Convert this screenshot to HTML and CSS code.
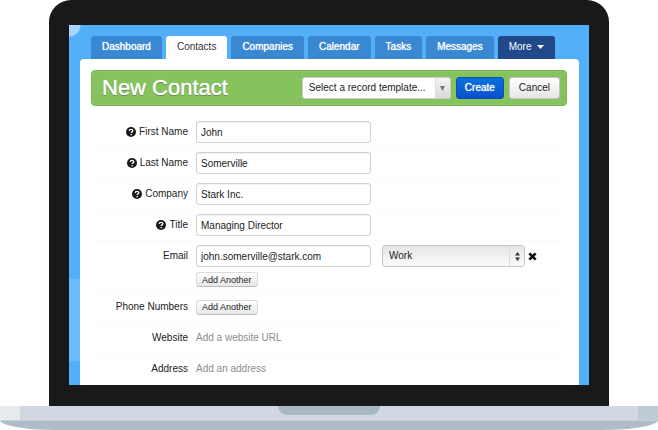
FILE: index.html
```html
<!DOCTYPE html>
<html lang="en">
<head>
    <meta charset="UTF-8">
    <meta name="viewport" content="width=device-width, initial-scale=1.0">
    <title>New Contact</title>
    <link rel="stylesheet" href="styles.css">
</head>
<body>
    <div class="laptop">
        <div class="lid">
            <div class="screen">
                <nav class="tabs">
                    <a href="#" class="tab">Dashboard</a>
                    <a href="#" class="tab active">Contacts</a>
                    <a href="#" class="tab">Companies</a>
                    <a href="#" class="tab">Calendar</a>
                    <a href="#" class="tab">Tasks</a>
                    <a href="#" class="tab">Messages</a>
                    <a href="#" class="tab more">More <svg width="7" height="4" viewBox="0 0 7 4"><path d="M0 0h7L3.5 4z" fill="#fff"/></svg></a>
                </nav>

                <form class="panel">
                    <div class="header">
                        <h1>New Contact</h1>
                        <div class="select-wrap template">
                            <select aria-label="Record template">
                                <option>Select a record template...</option>
                            </select>
                            <span class="arrow"><svg width="5" height="5" viewBox="0 0 5 5"><path d="M0 0h5L2.500 5z" fill="#777"/></svg></span>
                        </div>
                        <button type="button" class="btn primary">Create</button>
                        <button type="button" class="btn">Cancel</button>
                    </div>

                    <div class="row">
                        <label for="firstName"><svg class="help" viewBox="0 0 10 10"><circle cx="5" cy="5" r="5" fill="#1a1a1a"/><path d="M3.200 3.900C3.300 1.700 6.900 1.800 6.800 3.800C6.800 4.900 5.200 4.900 5.200 6.100M5.200 7v1.200" fill="none" stroke="#fff" stroke-width="1.300"/></svg>First Name</label>
                        <input type="text" id="firstName" value="John">
                    </div>
                    <div class="row">
                        <label for="lastName"><svg class="help" viewBox="0 0 10 10"><circle cx="5" cy="5" r="5" fill="#1a1a1a"/><path d="M3.200 3.900C3.300 1.700 6.900 1.800 6.800 3.800C6.800 4.900 5.200 4.900 5.200 6.100M5.200 7v1.200" fill="none" stroke="#fff" stroke-width="1.300"/></svg>Last Name</label>
                        <input type="text" id="lastName" value="Somerville">
                    </div>
                    <div class="row">
                        <label for="company"><svg class="help" viewBox="0 0 10 10"><circle cx="5" cy="5" r="5" fill="#1a1a1a"/><path d="M3.200 3.900C3.300 1.700 6.900 1.800 6.800 3.800C6.800 4.900 5.200 4.900 5.200 6.100M5.200 7v1.200" fill="none" stroke="#fff" stroke-width="1.300"/></svg>Company</label>
                        <input type="text" id="company" value="Stark Inc.">
                    </div>
                    <div class="row">
                        <label for="title"><svg class="help" viewBox="0 0 10 10"><circle cx="5" cy="5" r="5" fill="#1a1a1a"/><path d="M3.200 3.900C3.300 1.700 6.900 1.800 6.800 3.800C6.800 4.900 5.200 4.900 5.200 6.100M5.200 7v1.200" fill="none" stroke="#fff" stroke-width="1.300"/></svg>Title</label>
                        <input type="text" id="title" value="Managing Director">
                    </div>
                    <div class="row email">
                        <label for="email">Email</label>
                        <div class="field">
                            <div class="line">
                                <input type="email" id="email" value="john.somerville@stark.com">
                                <div class="select-wrap kind">
                                    <select aria-label="Email type">
                                        <option>Work</option>
                                        <option>Home</option>
                                    </select>
                                    <span class="arrow"><svg width="5" height="9" viewBox="0 0 5 9"><path d="M0 3.500h5L2.500 0zM0 5.500h5L2.500 9z" fill="#333"/></svg></span>
                                </div>
                                <button type="button" class="remove" aria-label="Remove email"><svg width="9" height="9" viewBox="0 0 9 9"><path d="M1.300 1.300l6.400 6.400M7.700 1.300l-6.400 6.400" stroke="#111" stroke-width="2.600"/></svg></button>
                            </div>
                            <button type="button" class="add">Add Another</button>
                        </div>
                    </div>
                    <div class="row">
                        <span class="label">Phone Numbers</span>
                        <button type="button" class="add">Add Another</button>
                    </div>
                    <div class="row">
                        <span class="label">Website</span>
                        <a href="#" class="hint">Add a website URL</a>
                    </div>
                    <div class="row">
                        <span class="label">Address</span>
                        <a href="#" class="hint">Add an address</a>
                    </div>
                </form>
            </div>
        </div>

        <div class="base">
            <div class="notch"></div>
        </div>
        <div class="underside"></div>
    </div>
</body>
</html>
```

FILE: styles.css
```css
* {
    box-sizing: border-box;
}

body {
    margin: 0;
    background-color: #fff;
    color: #222;
    font-family: "Liberation Sans", Arial, sans-serif;
    font-size: 10px;
    line-height: 12px;
}

input, select, button {
    margin: 0;
    color: #222;
    font-family: inherit;
    font-size: 10px;
    line-height: 12px;
}

a {
    text-decoration: none;
}

/* laptop */
.lid {
    margin: 0 49px;
    padding: 25px 20px 21px;
    background-color: #18191b;
    border-radius: 22px 22px 0 0;
}

.screen {
    padding: 11px 10px 0 11px;
    background-color: #54aff9;
    background-image:
        radial-gradient(circle at 0 0, #a9d4fb 11px, transparent 12px),
        radial-gradient(ellipse 60px 42px at 0 295px, #6cbbfa 98%, transparent 100%);
    overflow: hidden;
}

.base {
    display: flex;
    justify-content: center;
    height: 14px;
    background: linear-gradient(to right, #e8ebee 20px, #d1d8e1 20px, #d1d8e1 calc(100% - 20px), #c0cad4 calc(100% - 20px));
}

.notch {
    width: 102px;
    height: 9px;
    background-color: #a9b7c1;
    border-radius: 0 0 9px 9px;
}

.underside {
    height: 10px;
    background-color: #b0bdc8;
    border-top: 1px solid #c3ced6;
    border-radius: 0 0 55px 55px / 0 0 10px 10px;
}

/* tabs */
.tabs {
    display: flex;
    gap: 4px;
    padding-left: 11px;
}

.tab {
    padding: 5px 11px 6px;
    background-color: #3a87d2;
    border-radius: 3px 3px 0 0;
    color: #fff;
    text-shadow: 0 0 1px #fff;
}

.tab.active {
    background-color: #fff;
    color: #333;
    text-shadow: none;
}

.tab.more {
    background-color: #1f4989;
    text-shadow: none;
}

.tab svg {
    margin-left: 3px;
    vertical-align: 1px;
}

/* panel */
.panel {
    padding: 11px 12px 0 11px;
    background-color: #fff;
    border-radius: 4px 4px 0 0;
}

.header {
    display: flex;
    align-items: center;
    gap: 5px;
    height: 36px;
    margin-bottom: 11px;
    padding: 0 6px 0 10px;
    background-color: #86c35e;
    border: 1px solid #7cb955;
    border-radius: 4px;
}

h1 {
    flex: 1;
    margin: 0;
    color: #fff;
    font-size: 22px;
    font-weight: normal;
    line-height: 26px;
    text-shadow: 0 0 1px #fff, 0 1px 1px rgba(0, 0, 0, 0.4);
}

.select-wrap {
    position: relative;
}

.select-wrap select {
    width: 100%;
    height: 22px;
    padding: 0 20px 0 6px;
    appearance: none;
    background-color: #fff;
    border: 1px solid #ccc;
    border-radius: 3px;
}

.arrow {
    position: absolute;
    top: 1px;
    right: 1px;
    bottom: 1px;
    display: flex;
    align-items: center;
    justify-content: center;
    width: 15px;
    border-left: 1px solid #ddd;
    pointer-events: none;
}

.template {
    width: 149px;
}

.template .arrow {
    background: linear-gradient(#f4f4f4, #d8d8d8);
    border-radius: 0 2px 2px 0;
}

.kind {
    width: 143px;
    margin-left: 11px;
}

.kind select {
    background: linear-gradient(#e6e6e6, #fafafa);
    border-color: #c8c8c8;
}

.btn {
    height: 22px;
    padding: 0 9px;
    background: linear-gradient(#fff, #e6e6e6);
    border: 1px solid #c4c4c4;
    border-radius: 3px;
}

.btn.primary {
    padding: 0 8px;
    background: linear-gradient(#0a72de, #0a50cc);
    border-color: #0a4fb5;
    color: #fff;
    text-shadow: 0 0 1px #fff;
}

/* form rows */
.row {
    display: flex;
    align-items: center;
    height: 31px;
    border-bottom: 1px solid #fafafa;
}

.row label, .row .label {
    display: flex;
    align-items: center;
    justify-content: flex-end;
    width: 97px;
    margin-right: 8px;
}

.help {
    width: 10px;
    height: 10px;
    margin-right: 3px;
}

.row input {
    width: 175px;
    height: 22px;
    padding: 0 4px;
    border: 1px solid #d0d0d0;
    border-radius: 3px;
    box-shadow: inset 0 1px 1px rgba(0, 0, 0, 0.06);
}

.row.email {
    align-items: flex-start;
    height: auto;
    padding: 4px 0;
}

.email label {
    height: 22px;
}

.line {
    display: flex;
    align-items: center;
    margin-bottom: 5px;
}

.add {
    display: block;
    height: 15px;
    padding: 0 5px;
    background: linear-gradient(#fff, #e8e8e8);
    border: 1px solid #dcdcdc;
    border-bottom-color: #bcbcbc;
    border-radius: 3px;
    font-size: 9px;
}

.remove {
    display: flex;
    padding: 0;
    margin-left: 3px;
    background: none;
    border: 0;
}

.hint {
    color: #8c8c8c;
}
```
